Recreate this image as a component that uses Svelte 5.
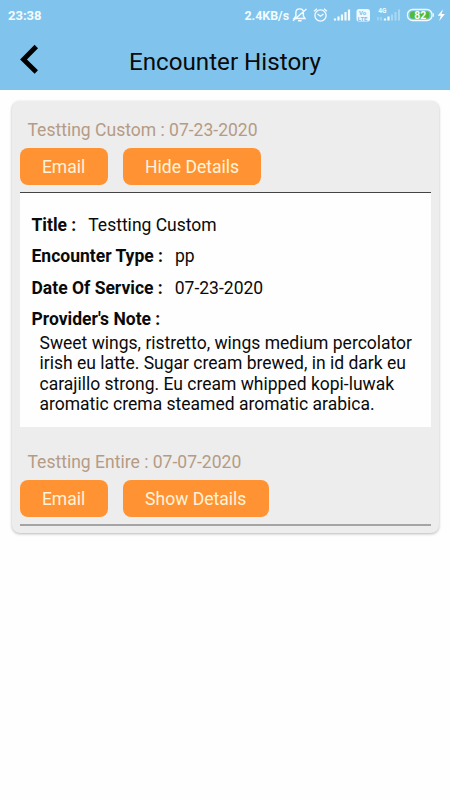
<script lang="ts">
  interface Encounter {
    id: number;
    title: string;
    type: string;
    date: string;
    note: string[];
  }

  const encounters: Encounter[] = [
    {
      id: 1,
      title: 'Testting Custom',
      type: 'pp',
      date: '07-23-2020',
      note: [
        'Sweet wings, ristretto, wings medium percolator',
        'irish eu latte. Sugar cream brewed, in id dark eu',
        'carajillo strong. Eu cream whipped kopi-luwak',
        'aromatic crema steamed aromatic arabica.'
      ]
    },
    { id: 2, title: 'Testting Entire', type: '', date: '07-07-2020', note: [] }
  ];

  let openId = $state<number | null>(1);

  function toggle(id: number) {
    openId = openId === id ? null : id;
  }
</script>

<div class="screen">
  <header class="header">
    <div class="status">
      <span class="status__time">23:38</span>
      <span class="status__speed">2.4KB/s</span>
      <svg class="status__icons" width="161" height="20" viewBox="289 5 161 20" fill="none" stroke="#f4fbff">
        <!-- muted bell -->
        <path d="M294 18.5h11l-1.6-2.4v-3.6c0-2.2-1.5-3.6-3.7-3.6s-3.8 1.4-3.8 3.6v3.6zM298 20.8h3.6M306.5 9L293 20.8" stroke-width="1.4" />
        <!-- alarm clock -->
        <circle cx="320.5" cy="15.5" r="5.6" stroke-width="1.3" />
        <path d="M317.5 14l3 2.2 3-2.2M314 11.2l3-2.5M327 11.2l-3-2.5" stroke-width="1.2" />
        <!-- signal, first sim -->
        <path d="M335 20.5v-2M338.5 20.5v-4M342 20.5v-6M345.5 20.5v-8.5M349 20.5v-11" stroke-width="2.2" />
        <rect x="356.5" y="9" width="13.5" height="12.5" rx="2.5" fill="#eef8ff" stroke="none" />
        <g fill="#7fbfe8" stroke="none" font-family="Roboto, sans-serif" font-weight="700">
          <text x="359" y="14.8" font-size="6">Vo</text>
          <text x="357.8" y="20.6" font-size="6">LTE</text>
        </g>
        <!-- signal, second sim -->
        <text x="378.2" y="13" font-size="6.5" font-weight="700" font-family="Roboto, sans-serif" fill="#f4fbff" stroke="none">4G</text>
        <path d="M378 17v3.5M381 17v3.5" stroke-width="1" opacity=".5" />
        <path d="M385 20.5v-2M388.5 20.5v-4" stroke-width="2.2" />
        <path d="M392 20.5v-6M395.5 20.5v-8.5M399 20.5v-11" stroke-width="2" opacity=".35" />
        <!-- battery -->
        <rect x="407.5" y="9.5" width="24.5" height="11" rx="5" stroke-width="1.3" />
        <path d="M433.3 13.2v3.6" stroke-width="1.2" />
        <path d="M413 11.3h13.5a3 3 0 0 1 3 3v1.4a3 3 0 0 1-3 3H413a3 3 0 0 1-3-3v-1.4a3 3 0 0 1 3-3z" fill="#50bb38" stroke="none" />
        <text x="414.2" y="18.8" font-size="10.5" font-weight="700" font-family="Roboto, sans-serif" fill="#fff" stroke="none">82</text>
        <path d="M443 9.2l-5.3 6.6h3.1l-1.6 5.2 5.7-7h-3.3z" fill="#fff" stroke="none" />
      </svg>
    </div>
    <div class="header__bar">
      <button class="header__back" aria-label="Back">
        <svg width="20" height="32" viewBox="0 0 20 32">
          <path d="M17.3 3.5L4.5 16.5l12.8 12.5" fill="none" stroke="#000" stroke-width="4.8" />
        </svg>
      </button>
      <h1 class="header__title">Encounter History</h1>
    </div>
  </header>

  <main class="card">
    {#each encounters as item (item.id)}
      <section class="encounter">
        <h2 class="encounter__name">{item.title} : {item.date}</h2>
        <div class="encounter__actions">
          <button class="btn">Email</button>
          <button class="btn" onclick={() => toggle(item.id)}>
            {openId === item.id ? 'Hide Details' : 'Show Details'}
          </button>
        </div>
        <div class="encounter__line" class:encounter__line--open={openId === item.id}></div>
        {#if openId === item.id}
          <div class="details">
            <p class="details__row"><b>Title :</b><span>{item.title}</span></p>
            <p class="details__row"><b>Encounter Type :</b><span>{item.type}</span></p>
            <p class="details__row"><b>Date Of Service :</b><span>{item.date}</span></p>
            <p class="details__row"><b>Provider's Note :</b></p>
            <p class="details__note">
              {#each item.note as line}
                <span>{line}</span>
              {/each}
            </p>
          </div>
        {/if}
      </section>
    {/each}
  </main>
</div>

<style>
  :global(body) {
    background: #fefefe;
  }

  .screen {
    min-height: 800px;
    font-family: Roboto, sans-serif;
    font-size: 17.5px;
    color: #0a0a0a;
  }

  .header {
    height: 90px;
    background: #80c4ed;
  }

  .status {
    display: flex;
    align-items: center;
    height: 30px;
    padding-left: 8px;
    color: #f4fbff;
    font-size: 12.4px;
    font-weight: 700;
  }

  .status__time {
    flex: 1;
    font-size: 13px;
  }

  .status__icons {
    flex: none;
  }

  .header__bar {
    display: grid;
    grid-template-columns: 60px 1fr 60px;
    align-items: center;
    height: 60px;
  }

  .header__back {
    display: flex;
    padding: 0 0 3px 19px;
    background: none;
    border: none;
  }

  .header__title {
    margin: 3px 0 0;
    text-align: center;
    font-size: 24.2px;
    font-weight: 400;
    white-space: nowrap;
  }

  .card {
    box-sizing: border-box;
    width: 427px;
    height: 432px;
    margin: 11px 0 0 11.5px;
    padding: 0 8px;
    background: #ededed;
    border-radius: 8px;
    box-shadow: 0 1px 3px rgba(0, 0, 0, 0.28);
  }

  .encounter {
    display: flow-root;
  }

  .encounter__name {
    margin: 19px 0 7px 8px;
    font-size: 17.55px;
    font-weight: 400;
    line-height: 21px;
    color: #b59b85;
  }

  .encounter + .encounter .encounter__name {
    margin-top: 25px;
  }

  .encounter__actions {
    display: flex;
    gap: 15px;
  }

  .btn {
    height: 36.5px;
    padding: 2px 22.4px 0;
    background: #ff9333;
    border: none;
    border-radius: 8px;
    color: #fff3dc;
    font: inherit;
    font-size: 17.55px;
    cursor: pointer;
  }

  .encounter__line {
    height: 2px;
    margin-top: 7px;
    background: #a4a4a4;
  }

  .encounter__line--open {
    height: 1px;
    background: #444;
  }

  .details {
    height: 234.5px;
    box-sizing: border-box;
    padding: 22.5px 12px 0;
    background: #fefefe;
  }

  .details__row {
    display: flex;
    gap: 12px;
    margin: 0 0 10.3px;
    line-height: 21px;
  }

  .details__note {
    margin: -7.5px 0 0 8px;
    line-height: 20.6px;
    white-space: nowrap;
  }

  .details__note span {
    display: block;
  }
</style>
